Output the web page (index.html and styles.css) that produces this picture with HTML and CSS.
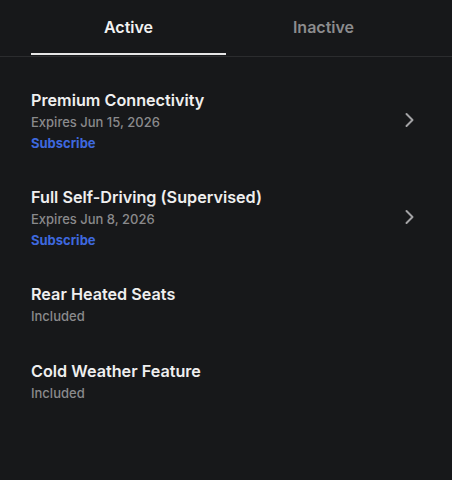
FILE: index.html
```html
<!DOCTYPE html>
<html lang="en">
<head>
<meta charset="utf-8">
<title>Upgrades</title>
<link rel="stylesheet" href="styles.css">
</head>
<body>
<div class="screen">
  <nav class="tabs">
    <div class="tab tab-active">Active</div>
    <div class="tab">Inactive</div>
  </nav>
  <ul class="list">
    <li class="row">
      <div class="info">
        <div class="title">Premium Connectivity</div>
        <div class="sub">Expires Jun 15, 2026</div>
        <div class="link">Subscribe</div>
      </div>
      <svg class="chev" width="12" height="16" viewBox="0 0 12 16"><path d="M3.5 2 L9.5 8 L3.5 14" fill="none" stroke="#a3a3a5" stroke-width="2" stroke-linecap="round" stroke-linejoin="round"/></svg>
    </li>
    <li class="row">
      <div class="info">
        <div class="title">Full Self-Driving (Supervised)</div>
        <div class="sub">Expires Jun 8, 2026</div>
        <div class="link">Subscribe</div>
      </div>
      <svg class="chev" width="12" height="16" viewBox="0 0 12 16"><path d="M3.5 2 L9.5 8 L3.5 14" fill="none" stroke="#a3a3a5" stroke-width="2" stroke-linecap="round" stroke-linejoin="round"/></svg>
    </li>
    <li class="row">
      <div class="info">
        <div class="title">Rear Heated Seats</div>
        <div class="sub">Included</div>
      </div>
    </li>
    <li class="row">
      <div class="info">
        <div class="title">Cold Weather Feature</div>
        <div class="sub">Included</div>
      </div>
    </li>
  </ul>
</div>
</body>
</html>
```
FILE: styles.css
```css
* { box-sizing: border-box; }
html, body {
  margin: 0;
  padding: 0;
  background: #17181a;
}
body {
  font-family: Inter, "Noto Sans", sans-serif;
  color: #eeeeee;
  width: 452px;
  height: 480px;
  overflow: hidden;
}
.screen {
  display: flex;
  flex-direction: column;
}
.tabs {
  display: flex;
  padding: 0 31px 1px;
  border-bottom: 1px solid #2b2c2e;
}
.tab {
  flex: 1;
  height: 55px;
  display: flex;
  align-items: center;
  justify-content: center;
  padding-top: 1px;
  font-size: 16px;
  font-weight: 600;
  color: #8c8c8e;
  border-bottom: 2px solid transparent;
}
.tab-active {
  color: #f2f2f2;
  border-bottom-color: #e6e6e6;
}
.list {
  list-style: none;
  margin: 0;
  padding: 16px 31px 0;
}
.row {
  display: flex;
  align-items: center;
  justify-content: space-between;
  padding: 17px 0;
}
.info {
  display: flex;
  flex-direction: column;
}
.title {
  font-size: 16.2px;
  line-height: 21px;
  font-weight: 600;
  color: #efefef;
}
.sub {
  font-size: 13px;
  line-height: 22px;
  font-weight: 500;
  color: #8a8a8c;
}
.link {
  font-size: 13px;
  line-height: 20px;
  font-weight: 700;
  color: #3e68de;
}
.chev {
  margin-right: 6px;
  margin-top: -3px;
}
```
